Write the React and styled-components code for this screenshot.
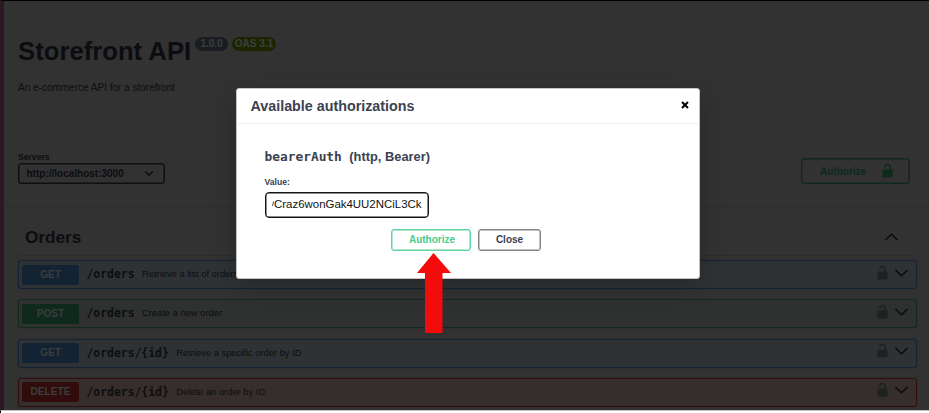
import React from 'react';
import styled, { createGlobalStyle } from 'styled-components';

const GlobalStyle = createGlobalStyle`
  * { box-sizing: border-box; }
  body { margin: 0; background: #fff; overflow: hidden; }
`;

const Screen = styled.div`
  position: relative;
  width: 929px;
  height: 413px;
  overflow: hidden;
  background: #fff;
  font-family: 'Liberation Sans', Arial, sans-serif;
`;

const Page = styled.div`
  height: 410px;
  border-top: 1px solid #000;
  border-left: 4px solid #2b1824;
  background: #323232;
  color: #0c0d10;
  overflow: hidden;
`;

const BottomEdge = styled.div`
  height: 3px;
  border-top: 1px solid #c4c0c2;
  border-left: 1px solid #000;
`;

const Info = styled.header`
  height: 124px;
  padding: 34px 14px 0;
`;

const TitleRow = styled.div`
  display: flex;
  align-items: flex-start;
  height: 45px;
`;

const Title = styled.h1`
  margin: 0;
  width: 177px;
  font-size: 25.7px;
  line-height: 32px;
  white-space: nowrap;
`;

const Pill = styled.span`
  width: ${(p) => p.$width}px;
  height: 14px;
  margin: 2px 4px 0 0;
  border-radius: 7px;
  background: ${(p) => p.$bg};
  color: #3d3f3f;
  font-size: 10px;
  font-weight: 700;
  line-height: 14px;
  text-align: center;
  white-space: nowrap;
`;

const Description = styled.p`
  margin: 0;
  font-size: 10px;
  line-height: 15px;
`;

const Scheme = styled.section`
  display: flex;
  justify-content: space-between;
  height: 82px;
  padding: 26px 19px 0 14px;
  border-bottom: 1px solid #2d2d2d;
`;

const ServerField = styled.div`
  width: 147px;
`;

const ServerLabel = styled.div`
  height: 12px;
  font-size: 8.6px;
  font-weight: 700;
  line-height: 12px;
`;

const Select = styled.div`
  display: flex;
  align-items: center;
  justify-content: space-between;
  height: 21px;
  padding: 0 11px 0 7.5px;
  border: 1px solid #0d0f12;
  box-shadow: inset 0 0 0 0.5px #0d0f12;
  border-radius: 3px;
  font-size: 10px;
  font-weight: 700;
`;

const TopAuthorize = styled.button`
  display: flex;
  align-items: center;
  justify-content: space-between;
  width: 109px;
  height: 26px;
  margin-top: 7px;
  padding: 0 16px 0 18px;
  border: 1px solid #0f291d;
  box-shadow: inset 0 0 0 0.5px #0f291d;
  border-radius: 3px;
  background: transparent;
  color: #0f291d;
  font: 700 10px 'Liberation Sans', Arial, sans-serif;
`;

const Operations = styled.section`
  width: 899px;
  margin-left: 14px;
`;

const TagHeader = styled.div`
  display: flex;
  align-items: center;
  justify-content: space-between;
  height: 49px;
  margin-bottom: 4px;
  padding: 12px 19px 0 7px;
  border-bottom: 1px solid #2d2d2d;
`;

const TagTitle = styled.h2`
  align-self: flex-start;
  margin: 6px 0 0;
  font-size: 17.2px;
  line-height: 24px;
`;

const palette = {
  GET: { line: '#132333', row: '#2f3235' },
  POST: { line: '#0f291d', row: '#2e312f' },
  DELETE: { line: '#320c0c', row: '#352e2d' },
};

const OperationRow = styled.div`
  display: flex;
  align-items: center;
  height: 29px;
  margin-bottom: 10.3px;
  padding: 0 8px 0 3px;
  border: 1px solid ${(p) => palette[p.$method].line};
  border-radius: 3px;
  background: ${(p) => palette[p.$method].row};
  box-shadow: 0 0 2px #2a2a2a;
`;

const Method = styled.span`
  width: 57px;
  height: 20px;
  border-radius: 2px;
  background: ${(p) => palette[p.$method].line};
  color: #3b3d3f;
  font-size: 10.1px;
  font-weight: 700;
  line-height: 20px;
  text-align: center;
`;

const Path = styled.span`
  margin: -1px 7.5px 0 7.5px;
  font: 700 11.4px/18px 'DejaVu Sans Mono', monospace;
`;

const Summary = styled.span`
  flex: 1;
  margin-top: -1px;
  font-size: 9.35px;
`;

const RowIcons = styled.span`
  display: flex;
  gap: 7px;
  margin-top: -4px;
  align-items: center;
`;

const Dialog = styled.div`
  position: absolute;
  left: 236px;
  top: 88px;
  width: 464px;
  height: 191px;
  border: 1px solid #c5c5c5;
  border-radius: 3px;
  background: #fff;
  box-shadow: 0 7px 22px rgba(0, 0, 0, 0.2);
  color: #3b4151;
`;

const DialogHeader = styled.div`
  display: flex;
  align-items: center;
  justify-content: space-between;
  height: 35px;
  padding: 0 10px 0 13.5px;
  border-bottom: 1px solid #f0f0f0;
`;

const DialogTitle = styled.h3`
  margin: 0;
  font-size: 14.3px;
`;

const CloseIcon = styled.svg`
  margin-top: -2px;
`;

const DialogBody = styled.div`
  padding: 24px 28px 0 27.5px;
`;

const SchemeName = styled.h4`
  display: flex;
  align-items: baseline;
  gap: 7.5px;
  height: 26px;
  margin: 0;
  font-size: 12.85px;
  line-height: 18px;

  code {
    font-family: 'DejaVu Sans Mono', monospace;
    font-size: 12.85px;
    font-weight: 700;
  }
`;

const ValueLabel = styled.label`
  display: block;
  height: 18px;
  font-size: 8.6px;
  font-weight: 700;
  line-height: 17px;
`;

const ValueBox = styled.div`
  display: flex;
  align-items: center;
  justify-content: flex-end;
  width: 164.5px;
  height: 26px;
  padding: 0 6.5px 2px;
  border: 1px solid #15171b;
  box-shadow: inset 0 0 0 0.5px #15171b;
  border-radius: 4px;
  background: #fff;
  color: #111;
  font-size: 11.45px;
  line-height: 22px;
  white-space: nowrap;
`;

const Actions = styled.div`
  display: flex;
  gap: 7px;
  padding: 11px 0 0 126.5px;
`;

const Button = styled.button`
  width: ${(p) => p.$width}px;
  height: 22px;
  padding: ${(p) => (p.$primary ? '0 0 1px 2px' : '0 0 1px')};
  border: 1px solid ${(p) => (p.$primary ? '#5fd3a0' : '#858585')};
  box-shadow: inset 0 0 0 0.5px ${(p) => (p.$primary ? '#5fd3a0' : '#858585')};
  border-radius: 3px;
  background: #fff;
  color: ${(p) => (p.$primary ? '#49cc90' : '#3b4151')};
  font: 700 10px 'Liberation Sans', Arial, sans-serif;
`;

const Pointer = styled.svg`
  position: absolute;
  left: 415px;
  top: 252px;
`;

function Lock({ color }) {
  return (
    <svg width="11" height="14" viewBox="0 0 11 14">
      <path d="M2.8 3.5V3.1a2.7 2.7 0 0 1 5.4 0V6" fill="none" stroke={color} strokeWidth="1.5" />
      <rect x="0.4" y="5.6" width="10.2" height="7.8" rx="1" fill={color} />
    </svg>
  );
}

function Chevron({ up, width = 13, height = 8, stroke = 1.25 }) {
  return (
    <svg width={width} height={height} viewBox="0 0 13 8" fill="none" stroke="#080808" strokeWidth={stroke} strokeLinecap="round">
      <path d={up ? 'M.8 6.8 6.5 1.2l5.7 5.6' : 'M.8 1.2l5.7 5.6 5.7-5.6'} />
    </svg>
  );
}

const operations = [
  { method: 'GET', path: '/orders', summary: 'Retrieve a list of orders' },
  { method: 'POST', path: '/orders', summary: 'Create a new order' },
  { method: 'GET', path: '/orders/{id}', summary: 'Retrieve a specific order by ID' },
  { method: 'DELETE', path: '/orders/{id}', summary: 'Delete an order by ID' },
];

export default function App() {
  return (
    <Screen>
      <GlobalStyle />
      <Page>
        <Info>
          <TitleRow>
            <Title>Storefront API</Title>
            <Pill $width={33} $bg="#191c20">1.0.0</Pill>
            <Pill $width={44} $bg="#1b2601">OAS 3.1</Pill>
          </TitleRow>
          <Description>An e-commerce API for a storefront</Description>
        </Info>
        <Scheme>
          <ServerField>
            <ServerLabel>Servers</ServerLabel>
            <Select>
              http://localhost:3000
              <Chevron width={8} height={5} stroke={2.2} />
            </Select>
          </ServerField>
          <TopAuthorize>
            Authorize
            <Lock color="#0f291d" />
          </TopAuthorize>
        </Scheme>
        <Operations>
          <TagHeader>
            <TagTitle>Orders</TagTitle>
            <Chevron up />
          </TagHeader>
          {operations.map((op) => (
            <OperationRow key={op.method + op.path} $method={op.method}>
              <Method $method={op.method}>{op.method}</Method>
              <Path>{op.path}</Path>
              <Summary>{op.summary}</Summary>
              <RowIcons>
                <Lock color="#1f2020" />
                <Chevron />
              </RowIcons>
            </OperationRow>
          ))}
        </Operations>
      </Page>
      <BottomEdge />
      <Dialog>
        <DialogHeader>
          <DialogTitle>Available authorizations</DialogTitle>
          <CloseIcon width="8" height="8" viewBox="0 0 8 8" stroke="#000" strokeWidth="2">
            <path d="M1 1l6 6M7 1 1 7" />
          </CloseIcon>
        </DialogHeader>
        <DialogBody>
          <SchemeName>
            <code>bearerAuth</code>
            <span>(http, Bearer)</span>
          </SchemeName>
          <ValueLabel>Value:</ValueLabel>
          <ValueBox>
            <svg width="2" height="6" viewBox="0 0 2 6">
              <path d="M1.5 0.5 0.5 5" stroke="#555" strokeWidth="1" />
            </svg>
            <span>Craz6wonGak4UU2NCiL3Ck</span>
          </ValueBox>
          <Actions>
            <Button $primary $width={80}>Authorize</Button>
            <Button $width={63}>Close</Button>
          </Actions>
        </DialogBody>
      </Dialog>
      <Pointer width="36" height="82" viewBox="0 0 36 82">
        <path d="M18.5 1 36 21H27.5V81H10V21H2Z" fill="#f40b0b" />
      </Pointer>
    </Screen>
  );
}
